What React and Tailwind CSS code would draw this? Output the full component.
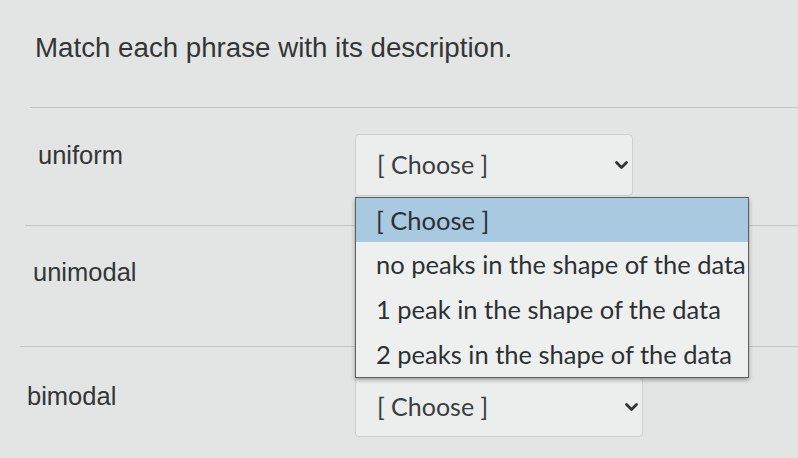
import React from 'react';

const Chevron = () => (
  <svg width="15" height="10" viewBox="0 0 15 10" className="text-[#333]">
    <path d="M2.5 2.5 L7.5 7.5 L12.5 2.5" fill="none" stroke="currentColor" strokeWidth="2.8" strokeLinecap="round" strokeLinejoin="round" />
  </svg>
);

const SelectBox = ({ width, height, hidden }) => (
  <div
    className={`${width} ${height} flex items-center justify-between pl-[21px] pr-[3px] bg-[#eceeed] border border-[#cfd1d0] rounded-[4px] text-[25px] text-[#3a3d3f]`}
    style={{ fontFamily: 'Lato, sans-serif' }}
  >
    {/* the open list covers this one, so no label is drawn under it */}
    <span>{hidden ? '' : '[ Choose ]'}</span>
    <Chevron />
  </div>
);

const options = [
  'no peaks in the shape of the data',
  '1 peak in the shape of the data',
  '2 peaks in the shape of the data'
];

const App = () => {
  return (
    <div
      className="w-[798px] h-[458px] overflow-hidden bg-[#e3e5e4] relative"
      style={{ fontFamily: '"Liberation Sans", Arial, sans-serif' }}
    >
      <div className="pt-[34px] pl-[35px] h-[107px] text-[27.7px] leading-none text-[#333536]">
        Match each phrase with its description.
      </div>

      <div className="relative">
        <div className="ml-[30px] border-t border-[#c3c5c4]" />
        <div className="h-[117px] flex">
          <div className="w-[355px] pl-[38px] pt-[35px] text-[25.5px] leading-none text-[#333536]">uniform</div>
          <div className="pt-[26px]">
            <SelectBox width="w-[278px]" height="h-[62px]" />
          </div>
        </div>

        <div className="ml-[25px] border-t border-[#c3c5c4]" />
        <div className="h-[120px] flex">
          <div className="w-[355px] pl-[33px] pt-[34px] text-[25.5px] leading-none text-[#333536]">unimodal</div>
          <div className="pt-[28px]">
            <SelectBox width="w-[283px]" height="h-[62px]" hidden />
          </div>
        </div>

        <div className="ml-[20px] border-t border-[#c3c5c4]" />
        <div className="h-[120px] flex">
          <div className="w-[355px] pl-[27px] pt-[37px] text-[25.5px] leading-none text-[#333536]">bimodal</div>
          <div className="pt-[30px]">
            <SelectBox width="w-[288px]" height="h-[60px]" />
          </div>
        </div>

        <div
          className="absolute left-[355px] top-[90px] w-[394px] bg-[#eef0ef] border border-[#5d6063] shadow-[0_2px_4px_rgba(0,0,0,0.35)] text-[25.5px] text-[#2c3033]"
          style={{ fontFamily: 'Lato, sans-serif' }}
        >
          <div className="h-[44px] flex items-center pl-[20px] bg-[#a8c9df]">[ Choose ]</div>
          {options.map((opt) => (
            <div key={opt} className="h-[45px] flex items-center pl-[20px] whitespace-nowrap">
              {opt}
            </div>
          ))}
        </div>
      </div>
    </div>
  );
};

export default App;
